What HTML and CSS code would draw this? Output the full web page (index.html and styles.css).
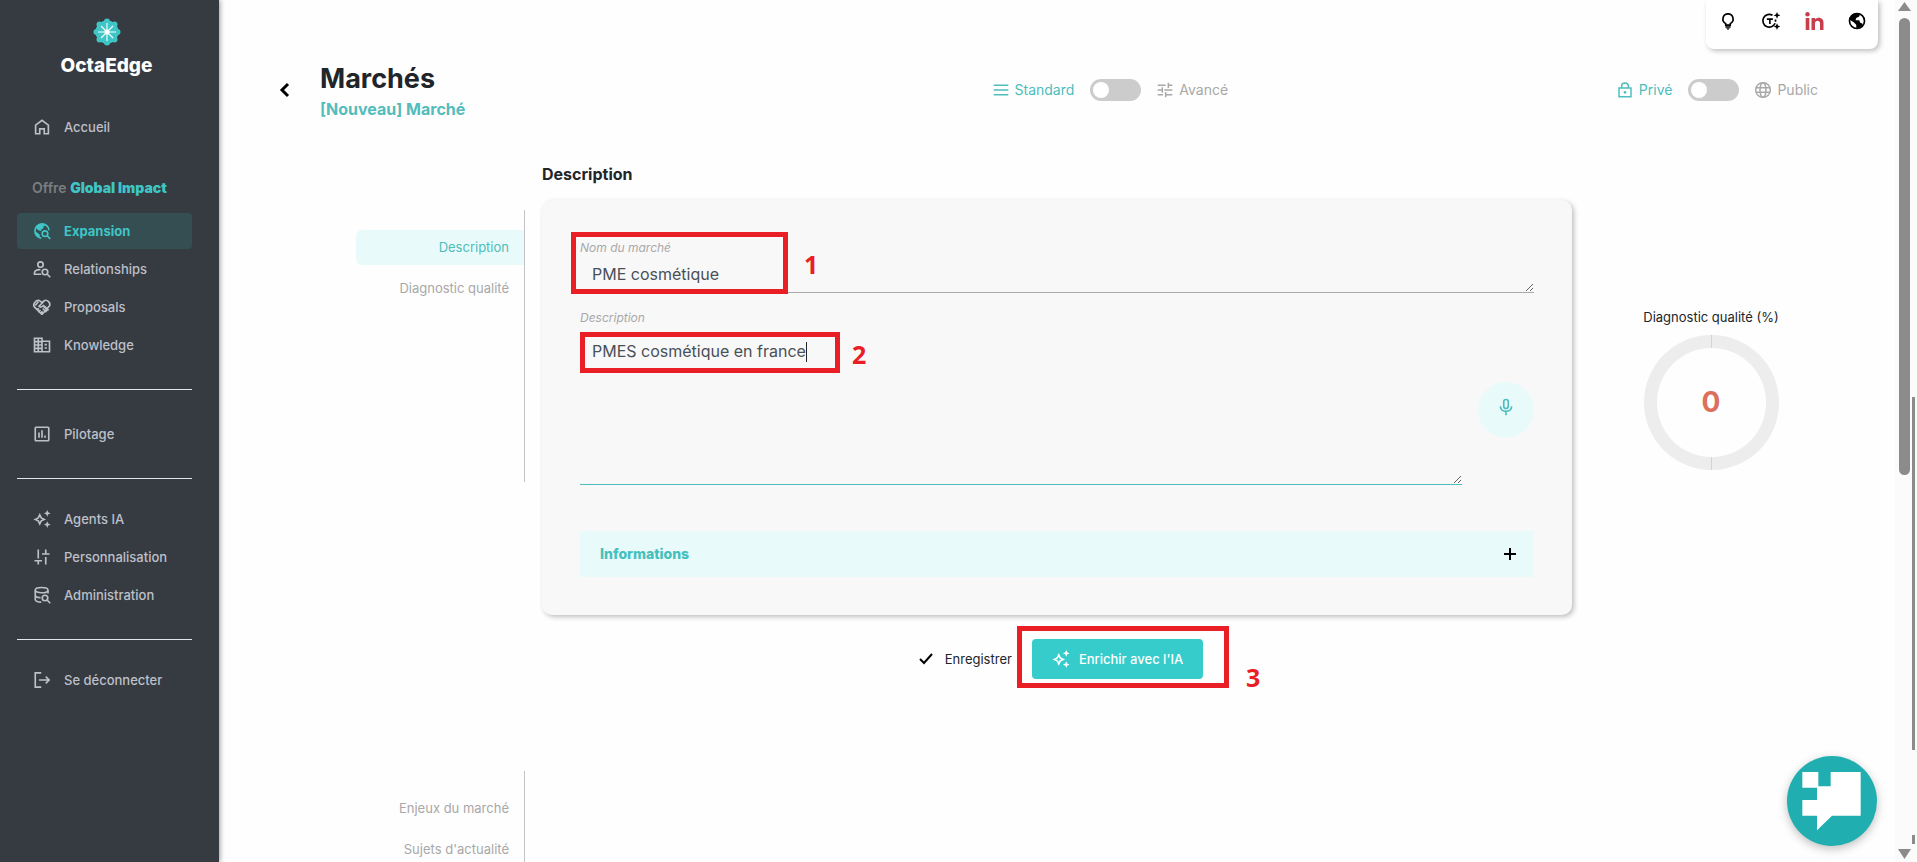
FILE: index.html
```html
<!DOCTYPE html>
<html lang="fr">
<head>
	<meta charset="utf-8">
	<title>OctaEdge - Marchés</title>
	<link rel="stylesheet" href="styles.css">
</head>
<body>

	<aside class="sidebar">
		<div class="brand">
			<svg width="28" height="28" viewBox="0 0 28 28">
				<g fill="#3fc5c5">
					<circle cx="14" cy="14" r="11.500"/>
					<circle cx="14" cy="3.500" r="3"/><circle cx="21.500" cy="6.500" r="3"/>
					<circle cx="24.500" cy="14" r="3"/><circle cx="21.500" cy="21.500" r="3"/>
					<circle cx="14" cy="24.500" r="3"/><circle cx="6.500" cy="21.500" r="3"/>
					<circle cx="3.500" cy="14" r="3"/><circle cx="6.500" cy="6.500" r="3"/>
				</g>
				<circle cx="14" cy="14" r="2.500" fill="#fff"/>
				<path stroke="#fff" stroke-width="1.100" d="M14 5v18M5 14h18M8 8l12 12M20 8L8 20"/>
			</svg>
			<div class="brand_name">OctaEdge</div>
		</div>

		<nav class="menu">
			<a class="item" href="#">
				<svg class="ico" viewBox="0 0 24 24"><path d="M3.500 9.500L12 3l8.500 6.500V21H15v-6.500H9V21H3.500z"/></svg>
				Accueil
			</a>

			<div class="offer">Offre <b>Global Impact</b></div>

			<a class="item active" href="#">
				<svg class="ico" viewBox="0 0 24 24">
					<path d="M11 21.500A9.500 9.500 0 1 1 21.500 11"/>
					<path class="full" d="M4 8l3 3 4 1v-2l3-2V6l3-2C12 1 6 2 3 7zM3 12l6 5v4c-4-1-6-5-6-9z"/>
					<circle cx="16" cy="15.500" r="3.700"/><path d="M19 18.500l4 4"/>
				</svg>
				Expansion
			</a>
			<a class="item" href="#">
				<svg class="ico" viewBox="0 0 24 24">
					<circle cx="10" cy="6" r="3.600"/>
					<path d="M11 19H2v-2c0-3 4-4.500 8-4"/>
					<circle cx="16" cy="16" r="3.700"/><path d="M19 19l4 4"/>
				</svg>
				Relationships
			</a>
			<a class="item" href="#">
				<svg class="ico" viewBox="0 0 24 24">
					<path d="M12 22L1.500 11.500C-.5 8 4 2 8.500 3.500L12 6l3-2.500c4-2 9 3 7 7L12 22M15 4l-7 7c2 2 4 1 6-1l7 6M8 14l-3 2M10 16l-3 3M13 18l-3 2M7 5l-4 5M14 11l5 5-2 2-4-4"/>
				</svg>
				Proposals
			</a>
			<a class="item" href="#">
				<svg class="ico" viewBox="0 0 24 24">
					<path d="M2 3h10v18H2zM12 7h10v14H12M2 7.500h10M2 12h10M2 16.500h10M7 3v18M15.500 11.500h3M15.500 16h3"/>
				</svg>
				Knowledge
			</a>

			<hr class="sep">

			<a class="item single" href="#">
				<svg class="ico" viewBox="0 0 24 24"><rect x="3" y="3" width="18" height="18" rx="1"/><path d="M8 17v-7M12 17V7M16 17v-3"/></svg>
				Pilotage
			</a>

			<hr class="sep">

			<a class="item" href="#">
				<svg class="ico" viewBox="0 0 24 24">
					<path d="M9 6.500l2 4 4 2-4 2-2 4-2-4-4-2 4-2z"/>
					<path class="full" d="M19 0l1.300 3L23.500 4.500l-3.200 1.300L19 9l-1.300-3.200L14.500 4.500l3.200-1.500zM19 15l1.300 3 3.200 1.500-3.200 1.300L19 24l-1.300-3.200-3.200-1.300 3.200-1.500z"/>
				</svg>
				Agents IA
			</a>
			<a class="item" href="#">
				<svg class="ico" viewBox="0 0 24 24"><path d="M7 2v12M7 18v4M2 17h10M17 22V12M17 7V2M12 8h10"/></svg>
				Personnalisation
			</a>
			<a class="item" href="#">
				<svg class="ico" viewBox="0 0 24 24">
					<ellipse cx="11.500" cy="5.500" rx="8.500" ry="3.500"/>
					<path d="M3 6v12c0 2 4 3.500 8 3.500M20 6v4M3 12c0 2 3 3.500 7 3.500"/>
					<circle cx="16" cy="16" r="3.700"/><path d="M19 19l4 4"/>
				</svg>
				Administration
			</a>

			<hr class="sep">

			<a class="item" href="#">
				<svg class="ico" viewBox="0 0 24 24"><path d="M11 2.500H3v19h8M8 12h13M17 7.500l4.500 4.500-4.500 4.500"/></svg>
				Se déconnecter
			</a>
		</nav>
	</aside>

	<main class="main">

		<div class="tools">
			<button class="tool" aria-label="Aide">
				<svg class="ico" viewBox="0 0 24 24"><path d="M9 17.500v-2C2.500 12 5 2.500 12 2.500s9.500 9.500 3 13v2zM8.500 20h7"/><path class="full" d="M9.500 21.500h5L12 24z"/></svg>
			</button>
			<button class="tool" aria-label="Texte">
				<svg class="ico" viewBox="0 0 24 24">
					<path d="M14 4.300A8.500 8.500 0 1 0 17.500 15M18 13v-3M6.500 9.500h8M10.500 9.500V16"/>
					<path class="full" d="M20 0l1.300 3L24.500 4.500l-3.200 1.300L20 9l-1.300-3.200L15.500 4.500l3.200-1.500zM20 15l1.300 3 3.200 1.500-3.200 1.300L20 24l-1.300-3.200-3.200-1.300 3.200-1.500z"/>
				</svg>
			</button>
			<button class="tool linkedin" aria-label="LinkedIn">
				<svg width="20" height="20" viewBox="0 0 20 20">
					<g fill="#c73e4c"><circle cx="3.500" cy="3.300" r="2.200"/><rect x="1.700" y="7" width="3.600" height="12"/>
					<path d="M7.500 7H11v1.600c2-3 8.500-2.600 8.500 2.900V19H16v-6.500c0-3.600-5-3.400-5 0V19H7.500z"/></g>
				</svg>
			</button>
			<button class="tool" aria-label="Langue">
				<svg class="ico" viewBox="0 0 24 24"><circle cx="12" cy="12" r="10"/><path class="full" d="M2 10c2-7 8-10 14-8l-1 4-4 2-1 3h5l1 3 4 2c-2 4-6 6-9 5v-4l-3-3z"/></svg>
			</button>
		</div>

		<header class="head">
			<div class="title">
				<button class="back" aria-label="Retour">
					<svg width="12" height="16" viewBox="0 0 12 16"><path d="M9 2L3 8l6 6" fill="none" stroke="#000" stroke-width="3"/></svg>
				</button>
				<div>
					<h1>Marchés</h1>
					<p class="subtitle">[Nouveau] Marché</p>
				</div>
			</div>
			<div class="switch">
				<label class="on" for="mode">
					<svg class="ico" viewBox="0 0 24 24"><path d="M1 5h22M1 12h22M1 19h22"/></svg>
					Standard
				</label>
				<input id="mode" type="checkbox">
				<label for="mode">
					<svg class="ico" viewBox="0 0 24 24"><path d="M1 5h12M17 5h6M17 1v8M1 12h6M11 12h12M8 8v8M1 19h8M13 19h10M13 15v8"/></svg>
					Avancé
				</label>
			</div>
			<div class="switch">
				<label class="on" for="visibility">
					<svg class="ico" viewBox="0 0 24 24"><path d="M3 9h18v13H3zM7 9V6c0-6 10-6 10 0v3"/><circle class="full" cx="12" cy="15.500" r="2"/></svg>
					Privé
				</label>
				<input id="visibility" type="checkbox">
				<label for="visibility">
					<svg class="ico" viewBox="0 0 24 24"><circle cx="12" cy="12" r="11"/><ellipse cx="12" cy="12" rx="4.500" ry="11"/><path d="M2 8.500h20M2 15.500h20"/></svg>
					Public
				</label>
			</div>
		</header>

		<section class="step">
			<nav class="anchors">
				<a class="current" href="#description">Description</a>
				<a href="#diagnostic">Diagnostic qualité</a>
			</nav>

			<form class="form">
				<h2>Description</h2>

				<div class="card">
					<div class="field">
						<label for="name">Nom du marché</label>
						<textarea id="name" class="one_line" spellcheck="false">PME cosmétique</textarea>
						<span class="mark mark1"></span>
						<span class="num num1">1</span>
					</div>

					<div class="field">
						<label for="desc">Description</label>
						<div class="with_mic">
							<textarea id="desc" class="big" spellcheck="false">PMES cosmétique en france</textarea>
							<button type="button" class="mic" aria-label="Dicter">
								<svg class="ico" viewBox="0 0 24 24"><rect x="9" y="2" width="6" height="12" rx="3"/><path d="M4.500 11c0 9 15 9 15 0M12 18v5"/></svg>
							</button>
						</div>
						<span class="caret"></span>
						<span class="mark mark2"></span>
						<span class="num num2">2</span>
					</div>

					<button type="button" class="infos">
						Informations
						<svg width="12" height="12" viewBox="0 0 12 12"><path d="M6 0v12M0 6h12" stroke="#000" stroke-width="2"/></svg>
					</button>
				</div>

				<div class="actions">
					<button type="button" class="save">
						<svg width="14" height="12" viewBox="0 0 14 12"><path d="M1 6l4 4 8-9" fill="none" stroke="#000" stroke-width="2"/></svg>
						Enregistrer
					</button>
					<div class="enrich_box">
						<button type="button" class="enrich">
							<svg class="ico" viewBox="0 0 24 24">
								<path d="M9 6.500l2 4 4 2-4 2-2 4-2-4-4-2 4-2z"/>
								<path class="full" d="M19 0l1.300 3L23.500 4.500l-3.200 1.300L19 9l-1.300-3.200L14.500 4.500l3.200-1.500zM19 15l1.300 3 3.200 1.500-3.200 1.300L19 24l-1.300-3.200-3.200-1.300 3.200-1.500z"/>
							</svg>
							Enrichir avec l'IA
						</button>
						<span class="mark mark3"></span>
						<span class="num num3">3</span>
					</div>
				</div>
			</form>

			<div class="gauge">
				<div>Diagnostic qualité (%)</div>
				<div class="ring">0</div>
			</div>
		</section>

		<section class="step">
			<nav class="anchors">
				<a href="#enjeux">Enjeux du marché</a>
				<a href="#sujets">Sujets d'actualité</a>
			</nav>
		</section>

		<button class="chat" aria-label="Chat">
			<svg viewBox="0 0 270 270"><path fill="#fff" d="M46 48h48v43h37V48h90v131h-86l-45 44v-44H46v-47h44V95H46z"/></svg>
		</button>
	</main>

	<div class="scroll">
		<span class="up"></span>
		<span class="thumb"></span>
		<span class="down"></span>
		<span class="outer"></span>
		<span class="outer_end"></span>
	</div>

</body>
</html>
```

FILE: styles.css
```css
* {box-sizing: border-box;}
body {margin: 0; display: flex; height: 100vh; overflow: hidden; background: #fefefe;
		font-family: Inter, "Open Sans", sans-serif; font-size: 13px; line-height: 20px; color: #212529;}
button {border: 0; padding: 0; background: none; font: inherit; color: inherit; cursor: pointer;}
a {color: inherit; text-decoration: none;}
.ico {width: 18px; height: 18px; flex: none; fill: none; stroke: currentColor; stroke-width: 2.2; overflow: visible;}
.full {fill: currentColor; stroke: none;}

/* sidebar */
.sidebar {width: 219px; flex: none; padding: 18px 27px 0 17px; background: #363a41; color: #bdc0c9;
		box-shadow: 1px 0 5px rgba(0,0,0,0.4); z-index: 2;}
.brand {display: flex; flex-direction: column; align-items: center; margin: 0 -2px 31px 2px;}
.brand_name {margin-top: 8px; font-size: 19px; line-height: 24px; font-weight: 800; color: #fff;}
.menu {display: flex; flex-direction: column; gap: 2px;}
.item {display: flex; align-items: center; gap: 13px; height: 36px; padding-left: 16px; border-radius: 4px; font-weight: 500;}
.item.active {background: #354e52; color: #3fc5c5; font-weight: 700;}
.item.single {margin-top: 4px;}
.offer {margin: 31px 0 13px 15px; font-size: 14px; font-weight: 600; color: #7b7d80;}
.offer b {color: #3fc5c5;}
.sep {width: 100%; height: 1px; margin: 24px 0 20px; border: 0; background: #e3e5e8;}

/* page */
.main {flex: 1; min-width: 0; position: relative; overflow: hidden;}
.tools {position: absolute; top: 0; right: 17px; display: flex; gap: 23px; padding: 11px 11px 18px 12px; background: #fff;
		border-radius: 0 0 8px 8px; box-shadow: 2px 2px 5px rgba(0,0,0,0.25);}
.tool {width: 20px; height: 20px; display: flex; align-items: center; justify-content: center; color: #000;}
.head {display: grid; grid-template-columns: 8fr 7fr auto; align-items: center; padding: 60px 77px 0 60px;}
.title {display: flex; align-items: center; gap: 29px;}
.title h1 {margin: 0; font-size: 27px; line-height: 38px; font-weight: 700;}
.subtitle {margin: 0; font-size: 16px; line-height: 22px; font-weight: 700; color: #53bcbc;}
.back {width: 12px; height: 16px;}
.switch {display: flex; align-items: center; gap: 16px;}
.switch .ico {width: 16px; height: 16px;}
.switch label {display: flex; align-items: center; gap: 6px; font-size: 14px; color: #a8a8a8;}
.switch label.on {color: #4dbdbd;}
.switch input {appearance: none; width: 51px; height: 22px; margin: 0; padding: 3px; border-radius: 11px; background: #ccc;}
.switch input::before {content: ""; display: block; width: 16px; height: 16px; border-radius: 50%; background: #fff;}
.switch input:checked::before {margin-left: auto;}

.step {display: grid; grid-template-columns: 169px minmax(0,1fr) 278px; align-items: start; padding: 41px 45px 2px 137px;}
.anchors {height: 272px; margin-top: 49px; padding-top: 20px; border-right: 1px solid #c4c4c4; text-align: right; color: #a8a8a8;}
.anchors a {display: block; margin-bottom: 6px; padding: 7px 15px 8px; border-radius: 6px 0 0 6px;}
.anchors .current {background: #e9fafa; color: #4dbdbd;}
.form {margin-left: 17px;}
.form h2 {margin: 0; padding: 3px 0 16px; font-size: 16px; line-height: 20px; font-weight: 700;}
.card {padding: 38px; background: #f8f8f8; border-radius: 10px; box-shadow: 2px 2px 5px rgba(0,0,0,0.25);}
.field {position: relative; margin-bottom: 15px;}
.field label {display: block; font-size: 12px; line-height: 20px; font-style: italic; color: #a8a8a8;}
textarea {display: block; width: 100%; border: 0; border-bottom: 1px solid #a8a8a8; outline: 0; background: none;
		font: inherit; font-size: 16px; color: #495057; padding: 6px 12px; overflow: hidden;}
.one_line {height: 35px;}
.with_mic {display: flex; align-items: center; gap: 16px;}
.big {height: 157px; padding-top: 13px; border-color: #4dbdbd;}
.mic {width: 56px; height: 56px; flex: none; margin-top: 6px; border-radius: 50%; background: #e9fafa; color: #4dbdbd;}
.caret {position: absolute; left: 226px; top: 34px; width: 1px; height: 20px; background: #212529;}
.infos {display: flex; align-items: center; justify-content: space-between; width: 100%; height: 46px; margin-top: 46px;
		padding: 0 18px 0 20px; background: #e9fafa; font-size: 14px; font-weight: 800; color: #45c0be;}
.actions {display: flex; justify-content: center; gap: 20px; padding: 24px 0 0 8px;}
.save {display: flex; align-items: center; gap: 12px;}
.enrich_box {position: relative;}
.enrich {display: flex; align-items: center; gap: 9px; height: 40px; padding: 0 20px; border-radius: 4px; background: #35cccb; color: #fff; font-weight: 500;}

.gauge {margin-top: 146px; text-align: center;}
.ring {width: 135px; height: 135px; margin: 8px auto 0; border-radius: 50%; font-size: 28px; line-height: 135px; font-weight: 700; color: #dc705d;
		background: radial-gradient(circle, #fefefe 54px, transparent 55px), linear-gradient(#e6cdc9, #e6cdc9) center / 1px 100% no-repeat, #ededed;}

/* red frames and step numbers over the form */
.mark {position: absolute; border: 5px solid #ea1f26; pointer-events: none;}
.mark1 {left: -9px; top: -6px; width: 217px; height: 62px;}
.mark2 {left: 0; top: 24px; width: 260px; height: 41px;}
.mark3 {left: -15px; top: -13px; width: 212px; height: 62px;}
.num {position: absolute; font-family: "Open Sans", sans-serif; font-size: 25px; line-height: 30px; font-weight: 700; color: #ea1f26;}
.num1 {left: 224px; top: 11px;}
.num2 {left: 272px; top: 31px;}
.num3 {left: 214px; top: 23px;}

.chat {position: absolute; right: 18px; bottom: 16px; width: 90px; height: 90px; border-radius: 50%; background: #20aeb1; box-shadow: 0 3px 10px rgba(0,0,0,0.25);}
.chat svg {display: block;}

/* scrollbars */
.scroll {position: relative; flex: none; width: 22px; background: #fbfbfb;}
.scroll span {position: absolute; background: #8b8b8b;}
.scroll .up {left: 3px; top: 2px; width: 13px; height: 9px; clip-path: polygon(50% 0, 100% 100%, 0 100%);}
.scroll .down {left: 3px; bottom: 3px; width: 13px; height: 10px; clip-path: polygon(0 0, 100% 0, 50% 100%);}
.scroll .thumb {left: 4px; top: 18px; width: 11px; height: 53%; border-radius: 6px;}
.scroll .outer {right: 2px; top: 46%; width: 3px; height: 41%;}
.scroll .outer_end {right: 2px; bottom: 18px; width: 3px; height: 9px;}
```
